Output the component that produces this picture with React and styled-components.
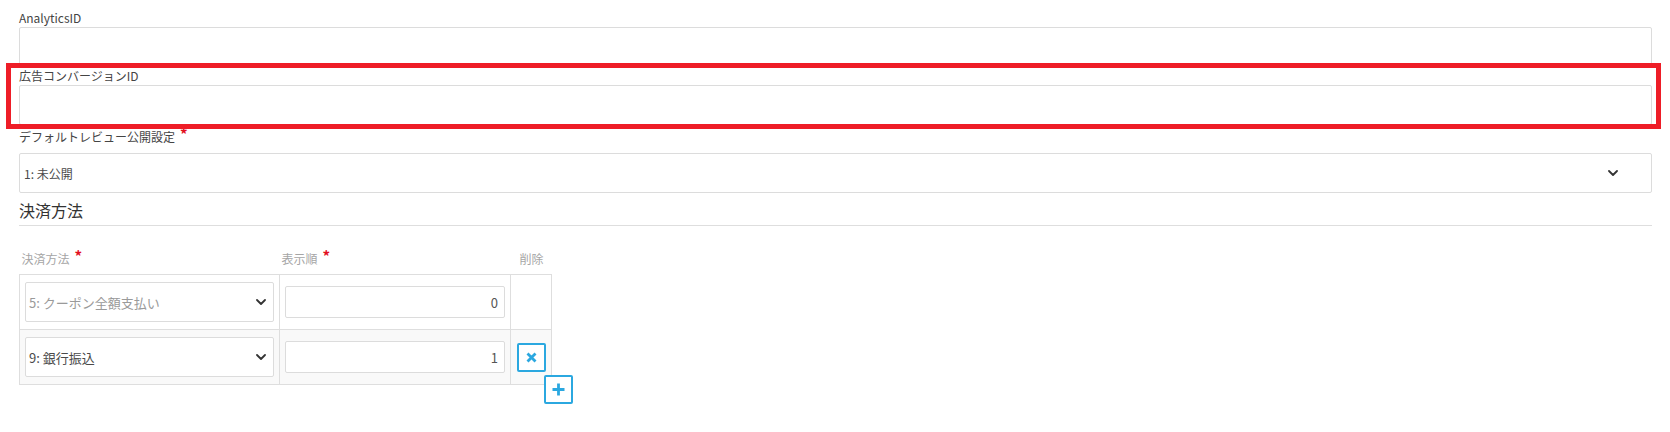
import React from "react";
import styled, { createGlobalStyle } from "styled-components";

const Global = createGlobalStyle`
  html, body { margin: 0; padding: 0; background: #fff; }
  body {
    font-family: "Noto Sans CJK JP", "Noto Sans", sans-serif;
    font-size: 12px;
    color: #444;
  }
  * { box-sizing: border-box; }
`;

const Page = styled.div`
  position: relative;
  padding: 9px 18px 0 19px;
  min-height: 432px;
`;

const Field = styled.div`
  display: flex;
  flex-direction: column;
`;

const Label = styled.label`
  display: block;
  font-size: 12px;
  line-height: 18px;
  color: #444;
  padding: ${(p) => (p.$required ? "3px 0 7px" : "0")};
`;

const Req = styled.span`
  color: #e2101f;
  font-size: 15px;
  font-weight: bold;
  line-height: 0;
  margin-left: 5px;
  position: relative;
  top: -2px;
`;

const TextInput = styled.input`
  display: block;
  width: 100%;
  height: 40px;
  border: 1px solid #dcdcdc;
  border-radius: 2px;
  padding: 0 6px;
  font: inherit;
  background: #fff;
  outline: none;
`;

const SelectBox = styled.div`
  display: flex;
  align-items: center;
  justify-content: space-between;
  width: 100%;
  height: 40px;
  border: 1px solid #dcdcdc;
  border-radius: 2px;
  padding: ${(p) => (p.$compact ? "0 7px 0 3px" : "0 33px 0 4px")};
  font-size: ${(p) => (p.$compact ? "13px" : "12px")};
  color: ${(p) => (p.$muted ? "#9a9a9a" : "#4a4a4a")};
  background: #fff;
`;

const SectionTitle = styled.h3`
  margin: 5px 0 0;
  font-size: 16px;
  font-weight: normal;
  line-height: 24px;
  color: #333;
  padding-bottom: 3px;
  border-bottom: 1px solid #dedede;
`;

const TableWrap = styled.div`
  position: relative;
  width: fit-content;
  margin-top: 24px;
`;

const Table = styled.table`
  border-collapse: collapse;
  table-layout: fixed;
  width: 532px;
`;

const Th = styled.th`
  font-weight: normal;
  font-size: 12px;
  line-height: 18px;
  color: #a5a5a5;
  text-align: ${(p) => (p.$center ? "center" : "left")};
  padding: 0 1px 6px 2px;
  vertical-align: bottom;
  white-space: nowrap;
`;

const Tr = styled.tr`
  background: ${(p) => (p.$striped ? "#f9f9f9" : "#fff")};
`;

const Td = styled.td`
  border: 1px solid #dedede;
  height: 55px;
  padding: 0 5px;
  vertical-align: middle;
  text-align: ${(p) => (p.$center ? "center" : "left")};
`;

const NumInput = styled.input`
  display: block;
  width: 100%;
  height: 32px;
  border: 1px solid #dcdcdc;
  border-radius: 2px;
  padding: 0 6px;
  text-align: right;
  font: inherit;
  font-size: 13px;
  color: #555;
  background: #fff;
  outline: none;
`;

const IconButton = styled.button`
  display: inline-flex;
  align-items: center;
  justify-content: center;
  width: 29px;
  height: 29px;
  padding: 0;
  border: 2px solid #2ba8e0;
  border-radius: 2px;
  background: #fff;
  color: #2ba8e0;
  cursor: pointer;
  vertical-align: middle;
`;

const AddButton = styled(IconButton)`
  position: absolute;
  left: 525px;
  top: 125px;
`;

const Highlight = styled.div`
  position: absolute;
  left: 6px;
  top: 63px;
  width: 1655px;
  height: 66px;
  border: 5px solid #ee1d27;
  pointer-events: none;
`;

const Chevron = () => (
  <svg width="10" height="6" viewBox="0 0 10 6" fill="none">
    <path d="M1 1l4 4 4-4" stroke="#333" strokeWidth="1.8" strokeLinecap="round" strokeLinejoin="round" />
  </svg>
);

const XIcon = () => (
  <svg width="11" height="11" viewBox="0 0 11 11">
    <path d="M1.5 1.5l8 8M9.5 1.5l-8 8" stroke="#2ba8e0" strokeWidth="2.8" />
  </svg>
);

const PlusIcon = () => (
  <svg width="13" height="13" viewBox="0 0 13 13">
    <path d="M6.5 0.5v12M0.5 6.5h12" stroke="#2ba8e0" strokeWidth="2.8" />
  </svg>
);

const rows = [
  { method: "5: クーポン全額支払い", order: "0", muted: true, removable: false },
  { method: "9: 銀行振込", order: "1", muted: false, removable: true },
];

export default function App() {
  return (
    <>
      <Global />
      <Page>
        <Field>
          <Label>AnalyticsID</Label>
          <TextInput />
        </Field>
        <Field>
          <Label>広告コンバージョンID</Label>
          <TextInput />
        </Field>
        <Field>
          <Label $required>
            デフォルトレビュー公開設定<Req>*</Req>
          </Label>
          <SelectBox>
            <span>1: 未公開</span>
            <Chevron />
          </SelectBox>
        </Field>
        <SectionTitle>決済方法</SectionTitle>
        <TableWrap>
          <Table>
            <colgroup>
              <col style={{ width: 260 }} />
              <col style={{ width: 231 }} />
              <col style={{ width: 41 }} />
            </colgroup>
            <thead>
              <tr>
                <Th>
                  決済方法<Req>*</Req>
                </Th>
                <Th>
                  表示順<Req>*</Req>
                </Th>
                <Th $center>削除</Th>
              </tr>
            </thead>
            <tbody>
              {rows.map((r, i) => (
                <Tr key={i} $striped={i % 2 === 1}>
                  <Td>
                    <SelectBox $compact $muted={r.muted}>
                      <span>{r.method}</span>
                      <Chevron />
                    </SelectBox>
                  </Td>
                  <Td>
                    <NumInput defaultValue={r.order} />
                  </Td>
                  <Td $center>
                    {r.removable && (
                      <IconButton>
                        <XIcon />
                      </IconButton>
                    )}
                  </Td>
                </Tr>
              ))}
            </tbody>
          </Table>
          <AddButton>
            <PlusIcon />
          </AddButton>
        </TableWrap>
        <Highlight />
      </Page>
    </>
  );
}
